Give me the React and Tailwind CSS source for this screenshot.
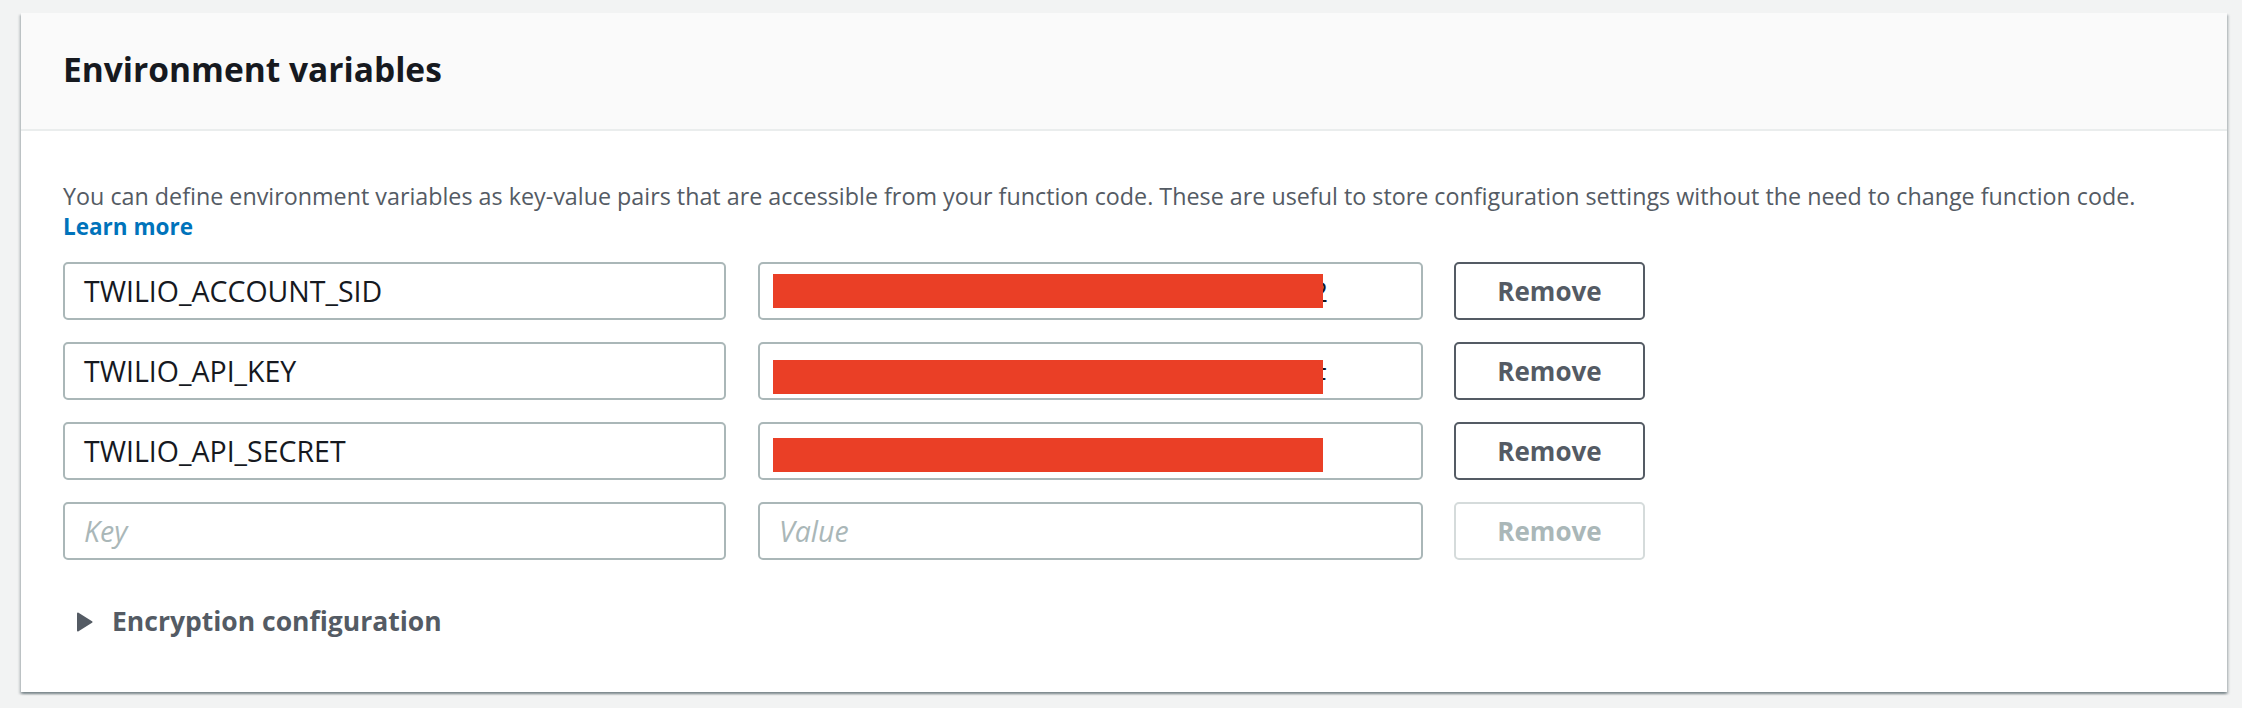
import React from "react";

const FONT = { fontFamily: '"Open Sans", "Noto Sans", sans-serif' };

const ROWS = [
  { key: "TWILIO_ACCOUNT_SID", peek: "2", barTop: "mt-[0px]" },
  { key: "TWILIO_API_KEY", peek: "F", barTop: "mt-[6px]" },
  { key: "TWILIO_API_SECRET", peek: "", barTop: "mt-[4px]" },
];

function Redacted({ peek, barTop }) {
  return (
    <div className={`flex items-center h-full pl-[13px] ${barTop}`}>
      <div className="relative z-10 w-[550px] h-[34px] bg-[#ea3f26]" />
      {peek && (
        <span className="-ml-[11px] text-[28px] text-[#16191f] leading-none">{peek}</span>
      )}
    </div>
  );
}

function Row({ row }) {
  return (
    <div className="flex items-center h-[58px]">
      <div className="w-[663px] h-full border-2 border-[#aab7b8] rounded-[5px] flex items-center pl-[19px] text-[28.5px] text-[#16191f]">
        {row.key}
      </div>
      <div className="ml-[32px] w-[665px] h-full border-2 border-[#aab7b8] rounded-[5px] overflow-hidden">
        <Redacted peek={row.peek} barTop={row.barTop} />
      </div>
      <button
        type="button"
        className="ml-[31px] w-[191px] h-full border-2 border-[#545b64] rounded-[5px] bg-white text-[26px] font-bold text-[#545b64]"
      >
        Remove
      </button>
    </div>
  );
}

export default function App() {
  return (
    <div className="min-h-[708px] bg-[#f2f3f3] pt-[13px] pl-[21px] pr-[15px]" style={FONT}>
      <div className="w-[2206px] h-[679px] bg-white shadow-[0_2px_2px_0_rgba(0,28,36,0.3),2px_2px_2px_0_rgba(0,28,36,0.15),-2px_2px_2px_0_rgba(0,28,36,0.15)]">
        <div className="h-[118px] bg-[#fafafa] border-b-2 border-[#eaeded] flex items-center pl-[42px]">
          <h2 className="text-[33.5px] font-bold text-[#16191f] leading-none -mt-[2px]">
            Environment variables
          </h2>
        </div>

        <div className="pl-[42px] pt-[50px]">
          <p className="text-[23.3px] leading-[30px] text-[#545b64]">
            You can define environment variables as key-value pairs that are accessible from your function code. These are useful to store configuration settings without the need to change function code.
            <br />
            <a href="#" className="font-bold text-[22.5px] text-[#0073bb]">Learn more</a>
          </p>

          <div className="mt-[20px] flex flex-col gap-[22px]">
            {ROWS.map((r) => (
              <Row key={r.key} row={r} />
            ))}
            <div className="flex items-center h-[58px]">
              <div className="w-[663px] h-full border-2 border-[#aab7b8] rounded-[5px] flex items-center pl-[19px] text-[28.5px] italic text-[#aab7b8]">
                Key
              </div>
              <div className="ml-[32px] w-[665px] h-full border-2 border-[#aab7b8] rounded-[5px] flex items-center pl-[19px] text-[28.5px] italic text-[#aab7b8]">
                Value
              </div>
              <button
                type="button"
                disabled
                className="ml-[31px] w-[191px] h-full border-2 border-[#d5dbdb] rounded-[5px] bg-white text-[26px] font-bold text-[#aab7b8]"
              >
                Remove
              </button>
            </div>
          </div>

          <div className="mt-[44px] flex items-center pl-[13px] h-[36px]">
            <svg width="17" height="20" viewBox="0 0 17 20" className="shrink-0">
              <path d="M2 1.5 L15.5 10 L2 18.5 Z" fill="#545b64" stroke="#545b64" strokeWidth="2" strokeLinejoin="round" />
            </svg>
            <span className="ml-[19px] text-[26.5px] font-bold text-[#545b64]">Encryption configuration</span>
          </div>
        </div>
      </div>
    </div>
  );
}
